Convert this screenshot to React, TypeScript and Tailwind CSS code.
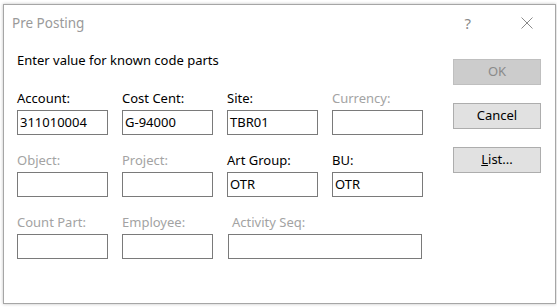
const font = { fontFamily: '"Noto Sans", "Open Sans", Arial, sans-serif' };

type Field = {
  label: string;
  value?: string;
  disabled?: boolean;
  wide?: boolean;
};

const fields: Field[] = [
  { label: 'Account:', value: '311010004' },
  { label: 'Cost Cent:', value: 'G-94000' },
  { label: 'Site:', value: 'TBR01' },
  { label: 'Currency:', disabled: true },
  { label: 'Object:', disabled: true },
  { label: 'Project:', disabled: true },
  { label: 'Art Group:', value: 'OTR' },
  { label: 'BU:', value: 'OTR' },
  { label: 'Count Part:', disabled: true },
  { label: 'Employee:', disabled: true },
  { label: 'Activity Seq:', disabled: true, wide: true },
];

const FieldCell = ({ field }: { field: Field }) => (
  <div className={field.wide ? 'col-span-2 pl-px' : ''}>
    <div
      className={`mb-[4px] h-[16px] text-[13px] leading-[16px] ${
        field.disabled ? 'text-[#a3a3a3]' : 'text-black'
      } ${field.wide ? 'pl-[4px]' : ''}`}
    >
      {field.label}
    </div>
    <div
      className={`flex h-[25px] items-center border border-[#7a7a7a] bg-white pl-[2px] text-[13px] text-black ${
        field.wide ? 'w-[194px]' : 'w-[91px]'
      }`}
    >
      {field.value}
    </div>
  </div>
);

const DialogButton = ({
  children,
  disabled,
}: {
  children: React.ReactNode;
  disabled?: boolean;
}) => (
  <button
    className={`flex h-[26px] w-[88px] items-center justify-center border text-[13px] ${
      disabled
        ? 'border-[#bfbfbf] bg-[#cccccc] text-[#8a8a8a]'
        : 'border-[#adadad] bg-[#e1e1e1] text-black'
    }`}
  >
    {children}
  </button>
);

const App = () => {
  return (
    <div className="h-[307px] w-[557px] bg-white pl-[3px] pt-[4px]" style={font}>
      <div className="flex h-[300px] w-[553px] flex-col border border-[#a6a6a6] bg-white shadow-[0_0_3px_rgba(0,0,0,0.25)]">
        <div className="flex h-[36px] items-center pl-[8px]">
          <span className="text-[13.5px] text-[#9a9a9a]">Pre Posting</span>
          <span className="ml-auto mr-[50px] text-[15px] text-[#8a8a8a]">?</span>
          <svg width="12" height="12" viewBox="0 0 12 12" className="mr-[22px]">
            <path d="M0.5 0.5 L11.5 11.5 M11.5 0.5 L0.5 11.5" stroke="#8a8a8a" strokeWidth="1" fill="none" />
          </svg>
        </div>

        <div className="flex">
          <div className="pl-[13px] pt-[11px]">
            <div className="h-[16px] text-[13px] leading-[16px] text-black">
              Enter value for known code parts
            </div>
            <div className="mt-[22px] grid grid-cols-[repeat(4,91px)] gap-x-[14px] gap-y-[17px]">
              {fields.map((field) => (
                <FieldCell key={field.label} field={field} />
              ))}
            </div>
          </div>

          <div className="ml-[30px] flex flex-col gap-[18px] pt-[18px]">
            <DialogButton disabled>OK</DialogButton>
            <DialogButton>Cancel</DialogButton>
            <DialogButton>
              <span>
                <span className="underline">L</span>ist...
              </span>
            </DialogButton>
          </div>
        </div>
      </div>
    </div>
  );
};

export default App;
